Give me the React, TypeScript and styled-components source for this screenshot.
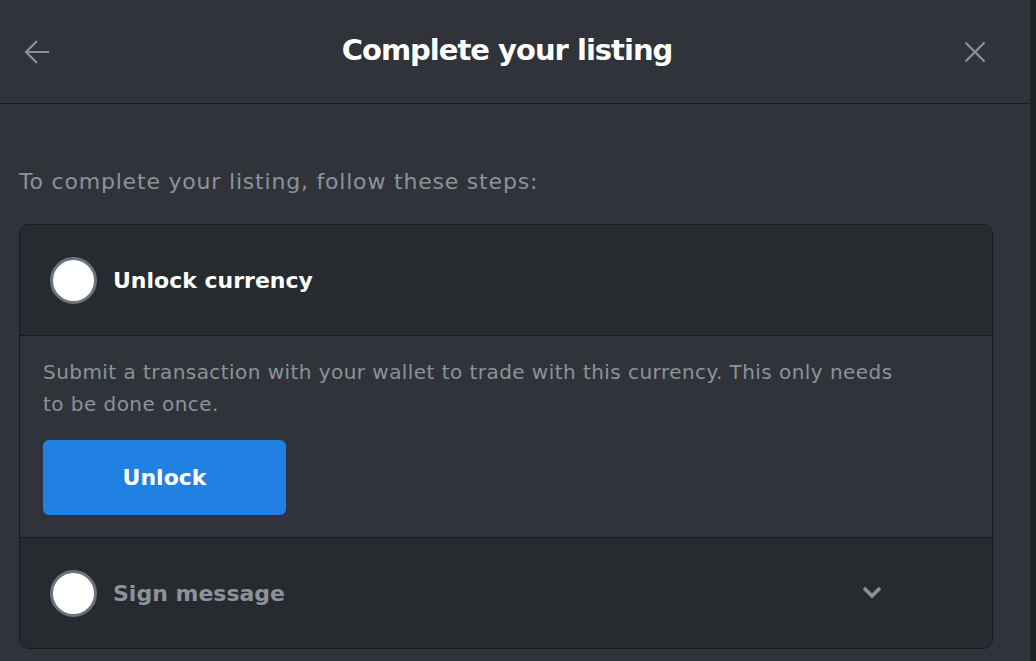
import React from 'react';
import styled, { createGlobalStyle } from 'styled-components';

const colors = {
  page: '#303339',
  card: '#262b2f',
  border: '#151b22',
  gray: '#8a939b',
  ring: '#6b737b',
  blue: '#2081e2',
  backdrop: '#1f2124',
};

const GlobalStyle = createGlobalStyle`
  html, body {
    margin: 0;
    padding: 0;
    background: ${colors.backdrop};
  }
  body {
    font-family: 'DejaVu Sans', 'Noto Sans', sans-serif;
    -webkit-font-smoothing: antialiased;
  }
`;

interface StepProps {
  title: string;
  active?: boolean;
  children?: React.ReactNode;
}

function Step(props: StepProps) {
  const { title, active, children } = props;

  return (
    <>
      <StepHeader>
        <Circle />
        <StepTitle active={active}>{title}</StepTitle>
        {!active && (
          <Chevron viewBox="0 0 20 14">
            <path d="M2 2l8 8 8-8" />
          </Chevron>
        )}
      </StepHeader>
      {active && children}
    </>
  );
}

export default function App() {
  return (
    <>
      <GlobalStyle />
      <Modal>
        <Header>
          <IconButton aria-label="back">
            <svg viewBox="0 0 26 26" width="26" height="26">
              <path d="M25 13H2M13 2L2 13l11 11" />
            </svg>
          </IconButton>
          <Title>Complete your listing</Title>
          <IconButton aria-label="close">
            <svg viewBox="0 0 22 22" width="22" height="22">
              <path d="M1.5 1.5l19 19M20.5 1.5l-19 19" />
            </svg>
          </IconButton>
        </Header>
        <Content>
          <Intro>To complete your listing, follow these steps:</Intro>
          <Card>
            <Step title="Unlock currency" active>
              <StepBody>
                <Description>
                  Submit a transaction with your wallet to trade with this currency. This only needs
                  to be done once.
                </Description>
                <PrimaryButton>Unlock</PrimaryButton>
              </StepBody>
            </Step>
            <Step title="Sign message" />
          </Card>
        </Content>
      </Modal>
    </>
  );
}

const Modal = styled.div`
  width: 1030px;
  height: 661px;
  background: ${colors.page};
  overflow: hidden;
`;

const Header = styled.header`
  display: flex;
  align-items: center;
  justify-content: space-between;
  height: 104px;
  padding: 0 44px 0 24px;
  box-sizing: border-box;
  border-bottom: 1px solid ${colors.border};
`;

const IconButton = styled.button`
  display: flex;
  align-items: center;
  justify-content: center;
  padding: 0;
  border: none;
  background: none;
  cursor: pointer;

  svg {
    fill: none;
    stroke: ${colors.gray};
    stroke-width: 2.2;
  }
`;

const Title = styled.h1`
  margin: 0 0 4px 0;
  font-size: 29px;
  font-weight: 700;
  letter-spacing: -1px;
  color: white;
`;

const Content = styled.div`
  padding: 63px 37px 0 19px;
`;

const Intro = styled.p`
  margin: 0 0 27px 0;
  font-size: 22px;
  line-height: 30px;
  letter-spacing: 0.8px;
  font-weight: 400;
  color: ${colors.gray};
`;

const Card = styled.div`
  border: 1px solid ${colors.border};
  border-radius: 10px;
  overflow: hidden;
`;

const StepHeader = styled.div`
  display: flex;
  align-items: center;
  height: 110px;
  padding: 0 0 0 30px;
  background: ${colors.card};

  & + & {
    border-top: 1px solid ${colors.border};
  }
`;

const Circle = styled.span`
  width: 41px;
  height: 41px;
  border-radius: 50%;
  background: white;
  border: 3px solid ${colors.ring};
  flex-shrink: 0;
`;

const StepTitle = styled.span<{ active?: boolean }>`
  flex: 1;
  margin-left: 16px;
  font-size: 22px;
  font-weight: 700;
  color: ${(p) => (p.active ? 'white' : colors.gray)};
`;

const Chevron = styled.svg`
  width: 20px;
  height: 14px;
  margin-right: 110px;
  fill: none;
  stroke: ${colors.gray};
  stroke-width: 3.4;
`;

const StepBody = styled.div`
  padding: 20px 23px 22px 23px;
  background: ${colors.page};
  border-top: 1px solid ${colors.border};
  border-bottom: 1px solid ${colors.border};
`;

const Description = styled.p`
  margin: 0 0 20px 0;
  max-width: 860px;
  font-size: 20px;
  line-height: 32px;
  letter-spacing: 0.45px;
  color: ${colors.gray};
`;

const PrimaryButton = styled.button`
  width: 243px;
  height: 75px;
  border: none;
  border-radius: 6px;
  background: ${colors.blue};
  color: white;
  font-family: inherit;
  font-size: 22px;
  font-weight: 700;
  cursor: pointer;
`;
